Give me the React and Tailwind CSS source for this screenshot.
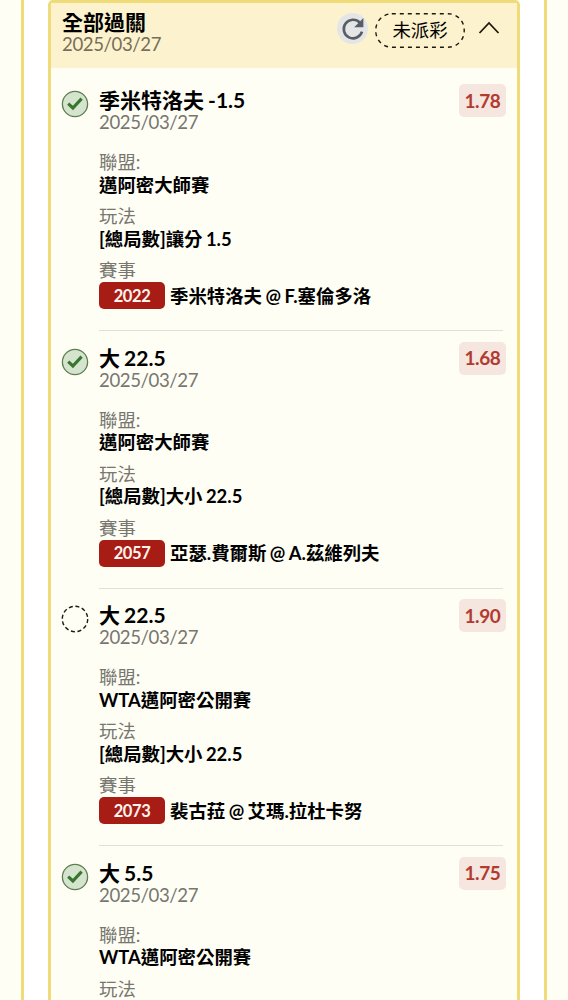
import React from 'react';

const BETS = [
  { id: 1, won: true, pick: '季米特洛夫 -1.5', odds: '1.78', league: '邁阿密大師賽', play: '[總局數]讓分 1.5', code: '2022', match: '季米特洛夫 @ F.塞倫多洛' },
  { id: 2, won: true, pick: '大 22.5', odds: '1.68', league: '邁阿密大師賽', play: '[總局數]大小 22.5', code: '2057', match: '亞瑟.費爾斯 @ A.茲維列夫' },
  { id: 3, won: false, pick: '大 22.5', odds: '1.90', league: 'WTA邁阿密公開賽', play: '[總局數]大小 22.5', code: '2073', match: '裴古菈 @ 艾瑪.拉杜卡努' },
  { id: 4, won: true, pick: '大 5.5', odds: '1.75', league: 'WTA邁阿密公開賽', play: null },
];

const StatusIcon = ({ won }) => (
  <svg viewBox="0 0 28 28" className="w-7 h-7 shrink-0">
    {won ? (
      <>
        <circle cx="14" cy="14" r="12.6" fill="#d5e4cd" stroke="#5d7d52" strokeWidth="1.3" />
        <path d="M7.2 13.6 L11.9 18 L20.6 8.6" fill="none" stroke="#37762f" strokeWidth="3.1" />
      </>
    ) : (
      <circle cx="14" cy="14" r="12.7" fill="none" stroke="#1c1c14" strokeWidth="1.4" strokeDasharray="4 2.65" />
    )}
  </svg>
);

const RefreshButton = () => (
  <button className="w-[31px] h-[31px] rounded-full bg-[#e4e5e6] flex items-center justify-center shrink-0">
    <svg viewBox="0 0 24 24" className="w-6 h-6">
      <path d="M21 14.6 A9.3 9.3 0 1 1 18.8 5.6" fill="none" stroke="#595d63" strokeWidth="2.6" />
      <path d="M22.4 1 V10.2 H13.2 Z" fill="#595d63" />
    </svg>
  </button>
);

const Field = ({ label, children }) => (
  <div className="mb-[10px]">
    <div className="h-[22px] leading-[22px] text-[18.4px] text-[#777770]">{label}</div>
    {children && (
      <div className="h-[22px] pt-[0.5px] leading-[22px] text-[18.4px] font-bold whitespace-pre [word-spacing:-1px]">{children}</div>
    )}
  </div>
);

const BetItem = ({ bet }) => (
  <div className="flex h-[257.5px] pt-[15px] pl-[10px] pr-[11px]">
    <div className="pt-[2px] w-[38px] shrink-0">
      <StatusIcon won={bet.won} />
    </div>
    <div className="flex-1">
      <div className="flex justify-between h-[63px]">
        <div>
          <div className="h-[23px] leading-[23px] text-[21px] font-bold whitespace-pre [word-spacing:-1px]">{bet.pick}</div>
          <div className="h-[22px] leading-[22px] text-[18.6px] tracking-[-0.4px] text-[#777770]">2025/03/27</div>
        </div>
        <div className="-mt-[4px] w-[47px] h-[33px] rounded-[5px] bg-[#f5e6e0] text-[#b23a2e] text-[19px] tracking-[-0.4px] font-bold flex items-center justify-center pt-px">{bet.odds}</div>
      </div>
      <Field label="聯盟:">{bet.league}</Field>
      <Field label="玩法">{bet.play}</Field>
      {bet.code && (
        <>
          <div className="h-[22px] leading-[22px] text-[18.4px] text-[#777770]">賽事</div>
          <div className="h-[27px] mt-px flex items-center text-[18.4px] font-bold whitespace-pre [word-spacing:-1px]">
            <span className="w-[66px] h-[27px] mr-[5px] rounded-[5px] bg-[#a81c16] text-[#fff4ec] text-[16.5px] tracking-[-0.4px] flex items-center justify-center shrink-0 pt-px">{bet.code}</span>
            <span className="pt-[2px]">{bet.match}</span>
          </div>
          <div className="mt-[21px] mr-[3px] h-px bg-[#e1e1da]" />
        </>
      )}
    </div>
  </div>
);

export default function App() {
  return (
    <div className="h-[1000px] overflow-hidden bg-[#fffef5] px-[21px] text-black font-['Lato','Noto_Sans_CJK_TC',sans-serif]">
      <div className="h-full border-x-3 border-[#efdb78] bg-white px-[24px]">
        <div className="h-[1100px] border-3 border-[#efdb78] rounded-t-[5px] bg-[#fffef5]">
          <div className="h-[65px] bg-[#fdf2ce] pl-[11px] pr-[17px] pt-[7px] flex justify-between">
            <div>
              <div className="h-[23px] leading-[23px] text-[21px] font-bold">全部過關</div>
              <div className="h-[22px] leading-[22px] text-[18.6px] tracking-[-0.4px] text-[#776f57]">2025/03/27</div>
            </div>
            <div className="flex h-[34px] mt-[3px]">
              <RefreshButton />
              <div className="relative ml-[7px] w-[90px] h-[35px] flex items-center justify-center text-[18.4px]">
                <svg viewBox="0 0 90 35" className="absolute inset-0 w-full h-full">
                  <rect x="0.8" y="0.8" width="88.4" height="33.4" rx="16" fill="none" stroke="#1c1a10" strokeWidth="1.4" strokeDasharray="4 4" />
                </svg>
                未派彩
              </div>
              <svg viewBox="0 0 22 14" className="w-[22px] h-[14px] ml-[13px] mt-[8px]">
                <path d="M1.5 12 L11 2 L20.5 12" fill="none" stroke="#1c1a10" strokeWidth="1.8" />
              </svg>
            </div>
          </div>
          <div className="pt-[5px]">
            {BETS.map(b => <BetItem key={b.id} bet={b} />)}
          </div>
        </div>
      </div>
    </div>
  );
}
